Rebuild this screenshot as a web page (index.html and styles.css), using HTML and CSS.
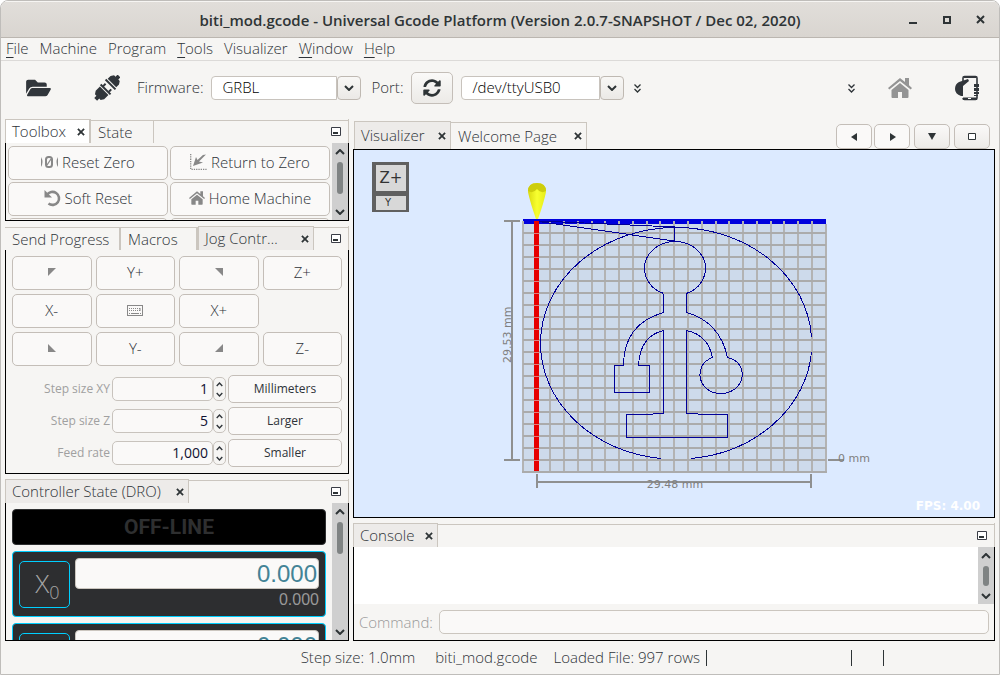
FILE: index.html
```html
<!DOCTYPE html>
<html lang="en">
<head>
<meta charset="utf-8">
<title>biti_mod.gcode - Universal Gcode Platform</title>
<link rel="stylesheet" href="styles.css">
</head>
<body>
<svg class="defs" aria-hidden="true">
  <symbol id="x" viewBox="0 0 9 9"><path d="M1 1l7 7M8 1l-7 7" stroke="currentColor" stroke-width="2" fill="none"/></symbol>
  <symbol id="up" viewBox="0 0 10 6"><path d="M1 5l4-4 4 4" stroke="currentColor" stroke-width="2" fill="none"/></symbol>
  <symbol id="down" viewBox="0 0 10 6"><path d="M1 1l4 4 4-4" stroke="currentColor" stroke-width="2" fill="none"/></symbol>
  <symbol id="min" viewBox="0 0 10 9"><path d="M.5.5h9v8h-9z" fill="#fff" stroke="#3a3d46"/><path d="M2 5h5v2H2z" fill="#2e3436"/></symbol>
  <symbol id="more" viewBox="0 0 7 9"><path d="M.5.5l3 3 3-3M.5 5l3 3 3-3" stroke="currentColor" stroke-width="1.3" fill="none"/></symbol>
  <symbol id="home" viewBox="0 0 24 20"><path d="M12 0l5 4V0h4v7.300l3 2.700-1.300 1.500L12 3 1.300 11.500 0 10zM12 5l8.500 7v7q0 1-1 1H14v-6h-4v6H4.500q-1 0-1-1v-7z" fill="currentColor"/></symbol>
</svg>
<div class="window">
  <header class="titlebar">
    <h1>biti_mod.gcode - Universal Gcode Platform (Version 2.0.7-SNAPSHOT / Dec 02, 2020)</h1>
    <div class="winbtns">
      <button aria-label="Minimize"><svg width="10" height="10"><path d="M1 7h8v2H1z" fill="#2e3436"/></svg></button>
      <button aria-label="Maximize"><svg width="10" height="10"><path d="M2 2h6v6H2z" fill="none" stroke="#2e3436" stroke-width="2"/></svg></button>
      <button aria-label="Close"><svg width="9" height="9"><use href="#x"/></svg></button>
    </div>
  </header>
  <nav class="menubar">
    <a href="#"><u>F</u>ile</a><a href="#">Machine</a><a href="#">Program</a><a href="#"><u>T</u>ools</a><a href="#">Visualizer</a><a href="#"><u>W</u>indow</a><a href="#"><u>H</u>elp</a>
  </nav>
  <div class="toolbar">
    <button class="tool open" aria-label="Open"><svg width="25" height="22" viewBox="0 0 576 512"><path fill="#31363b" d="M572.694 292.093L500.270 416.248A63.997 63.997 0 0 1 444.989 448H45.025c-18.523 0-30.064-20.093-20.731-36.093l72.424-124.155A64 64 0 0 1 152 256h399.964c18.523 0 30.064 20.093 20.730 36.093zM152 224h328v-48c0-26.510-21.490-48-48-48H272l-64-64H48C21.490 64 0 85.490 0 112v278.046l69.077-118.418C86.214 242.250 117.989 224 152 224z"/></svg></button>
    <button class="tool connect" aria-label="Connect"><svg width="26" height="26" viewBox="0 0 26 26"><g transform="rotate(-45 13 13)" fill="#31363b"><path d="M-3 11h3V9l3-2h6v12H3l-3-2v-2h-3zM10 6h2v14h-2zM12 8h3v2h-3zM12 16h3v2h-3zM17 6h2v14h-2zM20 7h4l3 2v2h3v4h-3v2l-3 2h-4z"/></g></svg></button>
    <label for="fw">Firmware:</label>
    <span class="combo fw"><select id="fw"><option>GRBL</option></select><span class="arrow"><svg width="10" height="6"><use href="#down"/></svg></span></span>
    <label for="port">Port:</label>
    <button class="btn refresh" aria-label="Refresh ports"><svg width="18" height="18" viewBox="0 0 512 512"><path fill="#2e3436" d="M370.720 133.280C339.458 104.008 298.888 87.962 255.848 88c-77.458.068-144.328 53.178-162.791 126.850-1.344 5.363-6.122 9.150-11.651 9.150H24.103c-7.498 0-13.194-6.807-11.807-14.176C33.933 94.924 134.813 8 256 8c66.448 0 126.791 26.136 171.315 68.685L463.030 40.970C478.149 25.851 504 36.559 504 57.941V192c0 13.255-10.745 24-24 24H345.941c-21.382 0-32.090-25.851-16.971-40.971l41.750-41.749zM32 296h134.059c21.382 0 32.090 25.851 16.971 40.971l-41.750 41.750c31.262 29.273 71.835 45.319 114.876 45.280 77.418-.070 144.315-53.144 162.787-126.849 1.344-5.363 6.122-9.150 11.651-9.150h57.304c7.498 0 13.194 6.807 11.807 14.176C478.067 417.076 377.187 504 256 504c-66.448 0-126.791-26.136-171.315-68.685L48.970 471.030C33.851 486.149 8 475.441 8 454.059V320c0-13.255 10.745-24 24-24z"/></svg></button>
    <span class="combo port"><select id="port"><option>/dev/ttyUSB0</option></select><span class="arrow"><svg width="10" height="6"><use href="#down"/></svg></span></span>
    <button class="tool more" aria-label="More"><svg width="7" height="9"><use href="#more"/></svg></button>
    <div class="tools-end">
      <button class="tool" aria-label="More actions"><svg width="7" height="9"><use href="#more"/></svg></button>
      <button class="tool gray" aria-label="Home machine"><svg width="24" height="20"><use href="#home"/></svg></button>
      <button class="tool" aria-label="Pendant"><svg width="24" height="26" viewBox="0 0 24 26"><path d="M8 6V3q0-1.500 1.500-1.500h11Q22 1.500 22 3v20q0 1.500-1.500 1.500h-11Q8 24.500 8 23" fill="none" stroke="#31363b" stroke-width="1.600"/><path d="M8 22.500h14V25H9q-1 0-1-1zM9 1h12v2H9z" fill="#31363b"/><path d="M13 23h3v1h-3z" fill="#fff"/><path d="M8 21H6Q0 19 0 14t4-7l9-3 1 2-6 5z" fill="#31363b"/><path d="M19 9h5v3h-5zM19 13h5v3h-5zM19 17h5v2h-5zM19 20h4v1h-4z" fill="#31363b"/></svg></button>
    </div>
  </div>

  <main class="workspace">
    <div class="column left">
      <section class="panel">
        <div class="tabs">
          <div class="tab white toolbox-tab"><span>Toolbox</span><button aria-label="Close Toolbox"><svg width="8" height="8"><use href="#x"/></svg></button></div>
          <div class="tab state-tab"><span>State</span></div>
          <button class="minimize" aria-label="Minimize group"><svg width="10" height="9"><use href="#min"/></svg></button>
        </div>
        <div class="body scroller toolbox">
          <div class="tool-grid">
            <button class="btn flat"><svg width="17" height="12" viewBox="0 0 17 12"><path d="M0 1q3 5 0 10zM17 1q-3 5 0 10z" fill="#888"/><rect x="5" y="1" width="6" height="10" rx="2.500" fill="none" stroke="#888" stroke-width="2"/><path d="M6 9l4-6" stroke="#888" stroke-width="1.300"/></svg>Reset Zero</button>
            <button class="btn flat"><svg width="17" height="16" viewBox="0 0 17 16"><path d="M.7 0v15.300H17" fill="none" stroke="#888" stroke-width="1.300" stroke-dasharray="1.300 1"/><path d="M3 12L6 3l1.500 3L14 0l-1 1 3-.5-7 7 4 1z" fill="#888"/></svg>Return to Zero</button>
            <button class="btn flat"><svg width="17" height="17" viewBox="0 0 17 17"><path d="M3 5a6.500 6.500 0 1 1 1.500 8.500" fill="none" stroke="#888" stroke-width="2.600"/><path d="M.5 0v7.500H8z" fill="#888"/></svg>Soft Reset</button>
            <button class="btn flat gray-icon"><svg width="16" height="14"><use href="#home"/></svg>Home Machine</button>
            <button class="btn flat" aria-label="Unlock"></button>
            <button class="btn flat" aria-label="Check mode"></button>
          </div>
          <div class="scrollbar"><svg width="10" height="6"><use href="#up"/></svg><i class="thumb"></i><svg width="10" height="6"><use href="#down"/></svg></div>
        </div>
      </section>

      <section class="panel">
        <div class="tabs">
          <div class="tab send-tab"><span>Send Progress</span></div>
          <div class="tab macros-tab"><span>Macros</span></div>
          <div class="tab active jog-tab"><span>Jog Contr…</span><button aria-label="Close Jog Controller"><svg width="8" height="8"><use href="#x"/></svg></button></div>
          <button class="minimize" aria-label="Minimize group"><svg width="10" height="9"><use href="#min"/></svg></button>
        </div>
        <div class="body jog">
          <div class="jog-grid">
            <button class="btn flat" aria-label="X- Y+"><svg width="8" height="8"><path d="M0 0h8L0 8z" fill="#888"/></svg></button>
            <button class="btn flat">Y+</button>
            <button class="btn flat" aria-label="X+ Y+"><svg width="8" height="8"><path d="M0 0h8v8z" fill="#888"/></svg></button>
            <button class="btn flat">Z+</button>
            <button class="btn flat">X-</button>
            <button class="btn flat" aria-label="Keyboard"><svg width="16" height="11" viewBox="0 0 16 11"><rect x=".5" y=".5" width="15" height="10" fill="none" stroke="#888"/><path d="M2 3.500h12M2 5.500h12" stroke="#888" stroke-dasharray="1 1"/><path d="M2 8.500h1M4 8.500h8M13 8.500h1M13 3v3" stroke="#888"/></svg></button>
            <button class="btn flat">X+</button>
            <span></span>
            <button class="btn flat" aria-label="X- Y-"><svg width="8" height="8"><path d="M0 0l8 8H0z" fill="#888"/></svg></button>
            <button class="btn flat">Y-</button>
            <button class="btn flat" aria-label="X+ Y-"><svg width="8" height="8"><path d="M8 0v8H0z" fill="#888"/></svg></button>
            <button class="btn flat">Z-</button>
          </div>
          <div class="steps">
            <label for="sxy">Step size XY</label>
            <div class="spin"><input id="sxy" value="1"><span class="arrows"><button aria-label="Increase"><svg width="7" height="5"><use href="#up"/></svg></button><button aria-label="Decrease"><svg width="7" height="5"><use href="#down"/></svg></button></span></div>
            <button class="btn flat">Millimeters</button>
            <label for="sz">Step size Z</label>
            <div class="spin"><input id="sz" value="5"><span class="arrows"><button aria-label="Increase"><svg width="7" height="5"><use href="#up"/></svg></button><button aria-label="Decrease"><svg width="7" height="5"><use href="#down"/></svg></button></span></div>
            <button class="btn flat">Larger</button>
            <label for="fr">Feed rate</label>
            <div class="spin"><input id="fr" value="1,000"><span class="arrows"><button aria-label="Increase"><svg width="7" height="5"><use href="#up"/></svg></button><button aria-label="Decrease"><svg width="7" height="5"><use href="#down"/></svg></button></span></div>
            <button class="btn flat">Smaller</button>
          </div>
        </div>
      </section>

      <section class="panel grow">
        <div class="tabs">
          <div class="tab active dro-tab"><span>Controller State (DRO)</span><button aria-label="Close DRO"><svg width="8" height="8"><use href="#x"/></svg></button></div>
          <button class="minimize" aria-label="Minimize group"><svg width="10" height="9"><use href="#min"/></svg></button>
        </div>
        <div class="body scroller dro">
          <div class="dro-list">
            <div class="offline">OFF-LINE</div>
            <div class="axis"><button>X<sub>0</sub></button><div class="values"><output class="work">0.000</output><output class="mach">0.000</output></div></div>
            <div class="axis"><button aria-label="Zero Y"></button><div class="values"><output class="work">0.000</output></div></div>
          </div>
          <div class="scrollbar"><svg width="10" height="6"><use href="#up"/></svg><i class="thumb"></i><svg width="10" height="6"><use href="#down"/></svg></div>
        </div>
      </section>
    </div>

    <div class="column right">
      <section class="panel grow">
        <div class="tabs editor-tabs">
          <div class="tab active vis-tab"><span>Visualizer</span><button aria-label="Close Visualizer"><svg width="8" height="8"><use href="#x"/></svg></button></div>
          <div class="tab welcome-tab"><span>Welcome Page</span><button aria-label="Close Welcome Page"><svg width="8" height="8"><use href="#x"/></svg></button></div>
          <div class="tab-actions">
            <button class="btn flat" aria-label="Scroll left"><svg width="7" height="8"><path d="M6 0v8L0 4z" fill="#2e3436"/></svg></button>
            <button class="btn flat" aria-label="Scroll right"><svg width="7" height="8"><path d="M1 0v8l6-4z" fill="#2e3436"/></svg></button>
            <button class="btn" aria-label="List documents"><svg width="8" height="7"><path d="M0 0h8L4 7z" fill="#2e3436"/></svg></button>
            <button class="btn" aria-label="Maximize"><svg width="8" height="7"><path d="M.5.5h7v6h-7z" fill="#fff" stroke="#2e3436"/></svg></button>
          </div>
        </div>
        <div class="canvas">
          <svg class="scene" viewBox="354 150 640 367" role="img" aria-label="Toolpath preview">
            <defs>
              <linearGradient id="cone" x1="0" x2="1"><stop offset="0" stop-color="#dada10"/><stop offset=".5" stop-color="#f8ff30"/><stop offset="1" stop-color="#e6ec18"/></linearGradient>
            </defs>
            <path d="M372 162h37v50h-37z" fill="#606060"/>
            <path d="M376 165h30v26h-30zM376 196h30v14h-30z" fill="#d8d8d8"/>
            <text x="391" y="183" class="cube" text-anchor="middle">Z+</text>
            <text x="388" y="206" class="cube small" text-anchor="middle">Y</text>
            <g shape-rendering="crispEdges">
              <path d="M523 221h303v251H523z" fill="#cddaeb"/>
              <path d="M523 219h303v5H523z" fill="#0000dd"/>
              <g fill="none" stroke="#b3b3b3" stroke-width="2">
                <path d="M523 221v251M537 221v251M550 221v251M564 221v251M578 221v251M592 221v251M605 221v251M619 221v251M633 221v251M647 221v251M660 221v251M674 221v251M688 221v251M702 221v251M716 221v251M729 221v251M743 221v251M757 221v251M771 221v251M784 221v251M798 221v251M812 221v251M826 224v249"/>
                <path stroke="#ababab" d="M523 233h303M523 245h303M523 257h303M523 269h303M523 281h303M523 293h303M523 305h303M523 317h303M523 329h303M523 340h303M523 352h303M523 364h303M523 376h303M523 388h303M523 400h303M523 412h303M523 424h303M523 436h303M523 448h303M523 460h303M522 472h305"/>
              </g>
              <path d="M534 221h5v250h-5z" fill="#e60000"/>
              <path d="M534 233h5M534 245h5M534 257h5M534 269h5M534 281h5M534 293h5M534 305h5M534 317h5M534 329h5M534 340h5M534 352h5M534 364h5M534 376h5M534 388h5M534 400h5M534 412h5M534 424h5M534 436h5M534 448h5M534 460h5" stroke="#e08080" fill="none"/>
              <g fill="none" stroke="#000099">
                <path d="M539 221L675 227 674 241 539 221.500"/>
                <path d="M661 458.500A135.500 116 0 0 1 540.500 343 135.500 116 0 0 1 676 227.500 135.500 116 0 0 1 811.500 337M811.500 352A135.500 116 0 0 1 691 458.500"/>
                <path d="M663.500 293.500A30.500 27 0 1 1 686.500 293.500M663.500 293.500V312.500Q623.500 324 623.500 365.500H614.500V392.500H649.500V365.500H638.500Q640 336 663.500 330.500V413.500L643 414.500H626.500V437.500H727.500V414.500H710L686.500 413.500V330.500Q708 335 712.500 357.500C692 365 698 393.500 720.500 393.500C746 393.500 750 362 727.500 357.500Q720 322 686.500 312.500V293.500"/>
              </g>
              <path d="M512 221v239M504 221h16M504 460h16M828 460h16M537 481.500h274M537 474v14M811 474v14" fill="none" stroke="#8f9090" stroke-width="2"/>
            </g>
            <path d="M528 192Q528 183 537 183T546 192Q544 202 538 219H536Q530 202 528 192Z" fill="url(#cone)"/>
            <path d="M528 191Q528 183 537 183T546 191Q541 194 537 189 533 194 528 191Z" fill="#cdcd0c"/>
            <text class="dim" x="675" y="488" text-anchor="middle">29.48 mm</text>
            <text class="dim" x="838" y="462">0 mm</text>
            <text class="dim" transform="translate(511 363) rotate(-90)">29.53 mm</text>
          </svg>
          <span class="fps">FPS: 4.00</span>
        </div>
      </section>

      <section class="panel">
        <div class="tabs">
          <div class="tab active console-tab"><span>Console</span><button aria-label="Close Console"><svg width="8" height="8"><use href="#x"/></svg></button></div>
          <button class="minimize" aria-label="Minimize group"><svg width="10" height="9"><use href="#min"/></svg></button>
        </div>
        <div class="body">
          <div class="log"><div class="output"></div><div class="scrollbar"><svg width="10" height="6"><use href="#up"/></svg><i class="thumb short"></i><svg width="10" height="6"><use href="#down"/></svg></div></div>
          <div class="command"><label for="cmd">Command:</label><input id="cmd"></div>
        </div>
      </section>
    </div>
  </main>

  <footer class="status">
    <span class="s-step">Step size: 1.0mm</span><span class="s-file">biti_mod.gcode</span><span class="s-rows">Loaded File: 997 rows</span><span class="s-gap"></span><span class="s-cell"></span>
  </footer>
</div>
</body>
</html>
```
FILE: styles.css
```css
* { box-sizing: border-box; }
body {
  margin: 0;
  background: #fff;
  color: #2e3338;
  font: 300 15px/20px "Open Sans", "Noto Sans", sans-serif;
}
button, input, select { font: inherit; color: inherit; margin: 0; padding: 0; }
button { border: 0; background: none; }
svg { display: block; flex: none; }
.defs { position: absolute; width: 0; height: 0; }

.window {
  height: 100vh;
  display: flex;
  flex-direction: column;
  background: #f6f5f3;
  border: 1px solid #bfbdba;
  border-radius: 8px 8px 0 0;
  overflow: hidden;
}
.titlebar {
  height: 37px;
  flex: none;
  display: grid;
  grid-template-columns: 91px 1fr 91px;
  align-items: center;
  background: linear-gradient(#e1deda, #d9d5d0);
  border-top: 1px solid #f6f5f3;
  border-bottom: 1px solid #bbb6b0;
}
.titlebar h1 {
  grid-column: 2;
  margin: 0;
  text-align: center;
  white-space: nowrap;
  color: #2e3436;
  font: 600 15px/20px "Open Sans", "Noto Sans", sans-serif;
}
.winbtns { display: flex; gap: 24px; align-items: center; color: #2e3436; }

.menubar {
  height: 23px;
  flex: none;
  display: flex;
  align-items: center;
  gap: 11px;
  padding: 0 0 2px 5px;
  border-bottom: 1px solid #dcdad8;
}
.menubar a { color: inherit; text-decoration: none; }
.menubar u { text-underline-offset: 3px; }

.toolbar { height: 54px; flex: none; display: flex; align-items: center; padding: 0 20px 0 25px; }
.toolbar label { padding-bottom: 2px; }
.connect { margin: 0 17px 0 43px; }
.combo { display: flex; height: 24px; margin: 0 10px 0 8px; color: #000; }
.combo select {
  flex: 1;
  appearance: none;
  border: 1px solid #c8c3bd;
  border-radius: 4px 0 0 4px;
  background: #fff;
  padding: 0 0 2px 10px;
}
.arrow {
  width: 24px;
  display: grid;
  place-items: center;
  border: 1px solid #bfb9b2;
  border-radius: 4px;
  background: linear-gradient(#f8f7f5, #ebe9e6);
  color: #2e3436;
}
.fw { width: 150px; }
.port { width: 163px; }
.refresh { width: 42px; height: 32px; margin-left: 8px; }
.more { color: #2e3436; }
.tools-end { margin-left: auto; display: flex; align-items: center; gap: 33px; }
.tools-end .tool:last-child { margin-left: 10px; }
.gray { color: #949494; }

.btn {
  display: flex;
  align-items: center;
  justify-content: center;
  gap: 4px;
  border: 1px solid #c4beb8;
  border-radius: 5px;
  background: linear-gradient(#faf9f8, #eceae7);
}
.flat { background: #faf9f8; }
.tool-grid .btn, .jog-grid .btn { padding-bottom: 2px; }
.gray-icon svg { color: #888; }

.workspace {
  flex: 1;
  min-height: 0;
  display: grid;
  grid-template-columns: 344px minmax(0, 1fr);
  gap: 4px;
  padding: 4px 4px 0;
}
.column { display: flex; flex-direction: column; gap: 5px; min-height: 0; }
.panel { display: flex; flex-direction: column; min-height: 0; }
.grow { flex: 1; }
.tabs {
  height: 24px;
  flex: none;
  display: flex;
  align-items: stretch;
  border-right: 1px solid #cbc6bf;
  background: linear-gradient(#cbc6bf, #cbc6bf) 0 1px / 100% 1px no-repeat;
}
.tab {
  display: flex;
  align-items: center;
  justify-content: space-between;
  margin-top: 1px;
  padding: 0 7px 0 7px;
  border-top: 1px solid #cbc6bf;
  border-right: 2px solid #cbc6bf;
  white-space: nowrap;
}
.tab span { padding-bottom: 1px; }
.tab.active, .tab.white { margin-top: 0; padding-left: 6px; border-left: 1px solid #cbc6bf; }
.tab.active { background: #edebe9; border-right-width: 1px; }
.tab.white { background: #fff; }
.tab button { color: #2e3436; }
.minimize { margin: 0 7px 0 auto; }
.toolbox-tab { width: 86px; padding-right: 4px; }
.state-tab { width: 63px; border-right-width: 1px; }
.send-tab { width: 116px; }
.macros-tab { width: 77px; }
.jog-tab { width: 116px; padding-right: 4px; }
.dro-tab { width: 184px; padding-right: 4px; }
.console-tab { width: 85px; padding-right: 4px; }
.editor-tabs { height: 30px; padding: 2px 0 0 1px; border-right: 0; background: none; }
.vis-tab { width: 97px; padding-right: 4px; }
.welcome-tab { width: 136px; margin-top: 1px; padding-right: 4px; border-right-width: 1px; }
.tab-actions { margin: 3px 5px 0 auto; display: flex; gap: 2px; }
.tab-actions .btn { width: 36px; height: 25px; }
.tab-actions .btn:nth-child(n+3) { margin-left: 2px; }

.body { border: 1px solid #000; border-top: 0; }
.scroller { display: flex; overflow: hidden; }
.scrollbar {
  width: 16px;
  flex: none;
  display: flex;
  flex-direction: column;
  align-items: center;
  padding: 6px 0 5px;
  background: #cfcfcf;
  color: #2e3436;
}
.thumb { width: 6px; height: 32px; margin: 7px 0 auto; border-radius: 3px; background: #7f8383; }
.thumb.short { height: 20px; }

.toolbox { height: 78px; }
.tool-grid {
  flex: 1;
  display: grid;
  grid-template-columns: 1fr 1fr;
  grid-auto-rows: 34px;
  gap: 2px;
  padding: 3px 2px 2px;
}

.jog { padding: 6px; }
.jog-grid { display: grid; grid-template-columns: repeat(4, 1fr); grid-auto-rows: 34px; gap: 4px; }
.steps {
  display: grid;
  grid-template-columns: 98px 114px 1fr;
  grid-auto-rows: 28px;
  gap: 4px 2px;
  align-items: center;
  margin-top: 9px;
}
.steps label { text-align: right; font-size: 12px; font-weight: 400; color: #a0a0a0; }
.steps .btn { height: 28px; padding-bottom: 1px; font-size: 12px; font-weight: 400; }
.spin { display: flex; height: 24px; }
.spin input {
  flex: 1;
  min-width: 0;
  text-align: right;
  padding: 0 4px 0 0;
  border: 1px solid #c8c3bd;
  border-radius: 5px;
  background: #faf9f8;
  color: #101030;
  font-weight: 400;
  font-size: 14px;
}
.arrows {
  width: 13px;
  display: flex;
  flex-direction: column;
  align-items: center;
  justify-content: space-between;
  padding: 4px 0 3px;
  border: 1px solid #c8c3bd;
  border-radius: 5px;
}

.dro { flex: 1; min-height: 0; }
.dro-list { flex: 1; display: flex; flex-direction: column; gap: 6px; padding: 6px; }
.offline {
  height: 36px;
  flex: none;
  border: 1px solid #2e2f30;
  border-radius: 4px;
  background: #000;
  color: #2e2f30;
  text-align: center;
  font: 700 21px/34px Roboto, "Liberation Sans", sans-serif;
}
.axis {
  height: 66px;
  flex: none;
  display: flex;
  gap: 5px;
  padding: 6px;
  border: 1px solid #00cfff;
  border-radius: 4px;
  background: #2d2e30;
}
.axis button {
  width: 51px;
  height: 47px;
  margin-top: 3px;
  padding: 0 0 4px 6px;
  border: 1px solid #00cfff;
  border-radius: 5px;
  color: #a6a6a6;
  font-size: 26px;
  line-height: 36px;
}
.axis sub { font-size: 18px; line-height: 0; }
.values { flex: 1; display: flex; flex-direction: column; text-align: right; }
.work, .mach { font-family: "Liberation Sans", sans-serif; font-weight: 400; }
.work {
  height: 31px;
  padding-right: 1px;
  border: 1px solid #cbc6bf;
  border-radius: 4px;
  background: #faf9f8;
  color: #438396;
  font-size: 24px;
  line-height: 29px;
}
.mach { color: #999; font-size: 16px; line-height: 22px; }

.canvas { flex: 1; min-height: 0; position: relative; border: 1px solid #000; background: #dceaff; }
.scene { width: 100%; height: 100%; }
.cube { font: 400 15px "DejaVu Sans", sans-serif; fill: #333; }
.cube.small { font-size: 10px; }
.dim { font: 400 11px "DejaVu Sans", sans-serif; fill: #808080; }
.fps {
  position: absolute;
  right: 14px;
  bottom: 2px;
  color: #fff;
  font: 700 12px/17px "DejaVu Sans", sans-serif;
}

.log { height: 57px; display: flex; }
.output { flex: 1; background: #fff; }
.command { height: 36px; display: flex; align-items: center; gap: 6px; padding: 0 5px; color: #999; }
.command input { flex: 1; height: 24px; border: 1px solid #cbc6bf; border-radius: 5px; background: #faf9f8; }

.status { height: 33px; flex: none; display: flex; justify-content: flex-end; align-items: center; padding: 0 115px 0 0; }
.status span { white-space: nowrap; }
.s-step { margin-right: 20px; }
.s-file { margin-right: 16px; }
.s-step, .s-file { height: 16px; line-height: 14px; }
.s-rows, .s-gap, .s-cell { height: 16px; line-height: 14px; border-right: 1px solid #2e3436; }
.s-rows { padding-right: 6px; }
.s-gap { width: 145px; }
.s-cell { width: 32px; }
```
